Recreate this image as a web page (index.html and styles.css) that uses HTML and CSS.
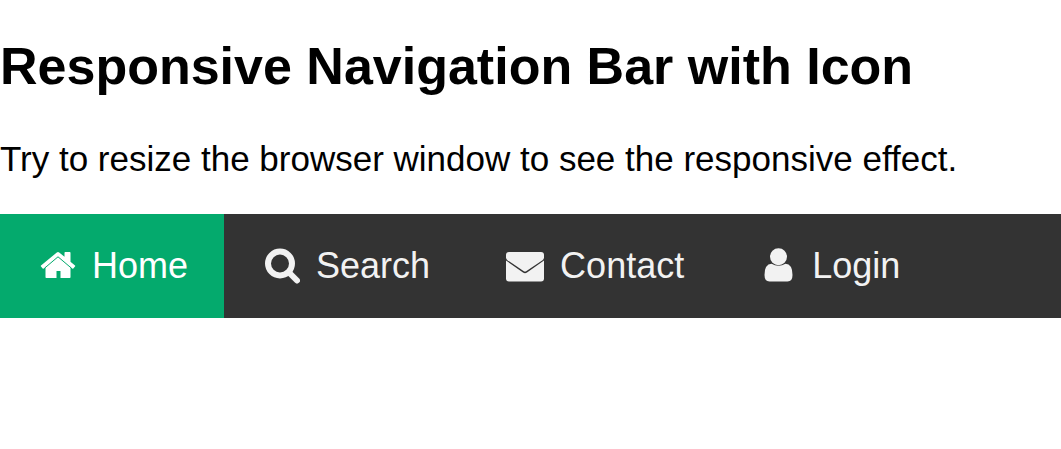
FILE: index.html
```html
<!DOCTYPE html>
<html lang="en">
<head>
<meta charset="utf-8">
<meta name="viewport" content="width=device-width, initial-scale=1">
<title>Responsive Navigation Bar with Icon</title>
<link rel="stylesheet" href="styles.css">
</head>
<body>
<h2 class="title">Responsive Navigation Bar with Icon</h2>
<p class="intro">Try to resize the browser window to see the responsive effect.</p>
<nav class="navbar">
  <a class="nav-link active" href="#home"><svg class="icon" viewBox="0 0 36 38" aria-hidden="true"><path d="M18 8.800L30.500 19v11.200q0 .8-.8.800H20.500V24h-4v7H6.300q-.8 0-.8-.8V19z"/><path d="M16.800 5.500q1.200-1 2.400 0l5.300 4.300V5.800q0-.8.8-.8h4.400q.8 0 .8.800v9l4.500 3.700q.5.500 0 1l-1.700 2q-.5.500-1 0L18 9.500 3.700 21.500q-.5.500-1 0L1 19.500q-.5-.5 0-1z"/><path class="slit" d="M5 20.800L18 9.800l13 11"/></svg>Home</a>
  <a class="nav-link" href="#search"><svg class="icon" viewBox="0 0 36 38" aria-hidden="true"><circle class="lens" cx="16" cy="16.500" r="12"/><path class="lens" d="M25 25.500l8 8" stroke-linecap="round"/></svg>Search</a>
  <a class="nav-link" href="#contact"><svg class="icon wide" viewBox="0 0 38 38" aria-hidden="true"><path d="M3 5h32q3 0 3 3v2.500q0 1.500-1.500 2.700L20.500 24q-1.500 1-3 0L1.500 13.200Q0 12 0 10.500V8q0-3 3-3z"/><path d="M0 13.500l17 12q2 1.400 4 0l17-12v18q0 3-3 3H3q-3 0-3-3z"/></svg>Contact</a>
  <a class="nav-link" href="#login"><svg class="icon" viewBox="0 0 36 38" aria-hidden="true"><circle cx="18.500" cy="9.800" r="8.500"/><path d="M11.500 16.800q7 4 14 0 7 .4 7 11.200 0 6.500-5 6.500H9.500q-5 0-5-6.500 0-10.800 7-11.200z"/></svg>Login</a>
</nav>
</body>
</html>
```
FILE: styles.css
```css
* {
  box-sizing: border-box;
}

body {
  margin: 0;
  padding-top: 36px;
  background: #fff;
  color: #000;
  font-family: "Liberation Sans", Arial, sans-serif;
}

.title {
  margin: 0 0 40px;
  font-size: 52px;
  line-height: 60px;
}

.intro {
  margin: 0 0 32px;
  font-size: 35px;
  line-height: 46px;
}

.navbar {
  display: flex;
  flex-wrap: wrap;
  background: #333;
}

.nav-link {
  display: flex;
  align-items: center;
  gap: 16px;
  padding: 30px 36px 30px 40px;
  color: #f2f2f2;
  font-size: 36px;
  line-height: 44px;
  text-decoration: none;
}

.nav-link:hover:not(.active) {
  background: #000;
}

.active {
  background: #04aa6d;
  color: #fff;
}

.icon {
  width: 36px;
  height: 38px;
  fill: currentColor;
}

.wide {
  width: 38px;
}

.slit {
  fill: none;
  stroke: #04aa6d;
  stroke-width: 1px;
}

.lens {
  fill: none;
  stroke: currentColor;
  stroke-width: 6px;
}

@media (max-width: 500px) {
  .nav-link {
    width: 100%;
  }
}
```
